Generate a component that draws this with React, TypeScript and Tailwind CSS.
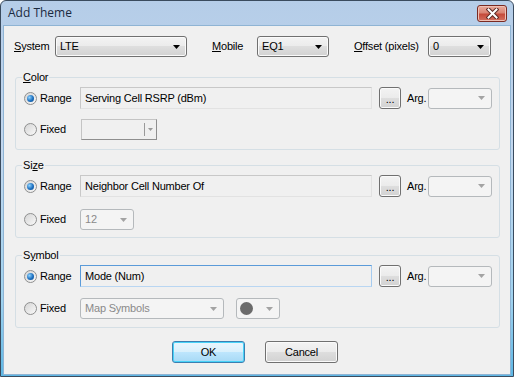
import React from 'react';

const FONT = "font-['Liberation_Sans',Arial,sans-serif] text-[11px] tracking-[-0.2px] text-black";

// ─── small pieces ─────────────────────────────────────────────────────────────
function Arrow({ disabled }: { disabled?: boolean }) {
  return (
    <svg width="7" height="4" viewBox="0 0 7 4" className="shrink-0">
      <path d="M0 0h7L3.5 4z" fill={disabled ? '#a3a3a3' : '#000'} />
    </svg>
  );
}

function Combo({ text, width, disabled, children }: { text?: string; width: string; disabled?: boolean; children?: React.ReactNode }) {
  return (
    <div
      className={`${width} h-[21px] shrink-0 rounded-[3px] border flex items-center justify-between pl-[4px] pr-[6px] ${
        disabled
          ? 'border-[#b5b9bc] bg-[#f4f4f4] text-[#8a8a8a]'
          : 'border-[#707070] bg-[linear-gradient(#f3f3f3_0%,#ebebeb_50%,#dedede_50%,#d2d2d2_100%)] shadow-[inset_0_0_0_1px_#fafafa]'
      }`}
    >
      {children ?? <span className="leading-none">{text}</span>}
      <Arrow disabled={disabled} />
    </div>
  );
}

function Radio({ checked }: { checked?: boolean }) {
  return (
    <span className="w-[13px] h-[13px] shrink-0 rounded-full border border-[#8e8f8f] bg-[linear-gradient(135deg,#d5d5d5,#f9f9f9)] flex items-center justify-center">
      {checked && (
        <span className="w-[7px] h-[7px] rounded-full bg-[radial-gradient(circle_at_35%_35%,#8fd3ff,#1c6fbf_55%,#0d4a8c)]" />
      )}
    </span>
  );
}

function RadioLabel({ label, checked }: { label: string; checked?: boolean }) {
  return (
    <div className="w-[56px] shrink-0 flex items-center gap-[3px]">
      <Radio checked={checked} />
      <span>{label}</span>
    </div>
  );
}

function TextBox({ text, focused }: { text: string; focused?: boolean }) {
  return (
    <div
      className={`w-[292px] h-[22px] shrink-0 border flex items-center px-[4px] ${
        focused
          ? 'border-[#5b9bd9] border-r-[#a6cbef] border-b-[#b9d6f2] bg-[#f0f0f0]'
          : 'border-[#c8c8c8] border-r-[#e2e2e2] border-b-[#e2e2e2] bg-[#f0f0f0]'
      }`}
    >
      {text}
    </div>
  );
}

function DotsButton() {
  return (
    <div className="ml-[7px] w-[22px] h-[22px] shrink-0 rounded-[3px] border border-[#707070] bg-[linear-gradient(#f3f3f3_0%,#ebebeb_50%,#dedede_50%,#d2d2d2_100%)] shadow-[inset_0_0_0_1px_#fafafa] flex items-end justify-center pb-[3px] leading-none">
      ...
    </div>
  );
}

function RangeRow({ text, focused }: { text: string; focused?: boolean }) {
  return (
    <div className="flex items-center mt-[3px] h-[22px]">
      <RadioLabel label="Range" checked />
      <TextBox text={text} focused={focused} />
      <DotsButton />
      <span className="ml-[6px] w-[21px] shrink-0">Arg.</span>
      <Combo width="w-[64px]" disabled />
    </div>
  );
}

function Group({ legend, children }: { legend: React.ReactNode; children: React.ReactNode }) {
  return (
    <div className="ml-[11px] w-[485px] h-[73px] rounded-[3px] border border-[#d5dfe5] pl-[8px] flex flex-col">
      <div className="-mt-[7px] h-[13px] leading-[13px] -ml-[2px] px-[1px] w-fit bg-[#f0f0f0]">{legend}</div>
      {children}
    </div>
  );
}

function Button({ label, isDefault, ml }: { label: string; isDefault?: boolean; ml: string }) {
  return (
    <div
      className={`${ml} w-[73px] h-[22px] rounded-[3px] border flex items-center justify-center ${
        isDefault
          ? 'border-[#3c7fb1] bg-[linear-gradient(#eaf6fd_0%,#d9f0fc_50%,#bee6fd_50%,#a7d9f5_100%)] shadow-[inset_0_0_0_1px_#48d3f8]'
          : 'border-[#707070] bg-[linear-gradient(#f3f3f3_0%,#ebebeb_50%,#dedede_50%,#d2d2d2_100%)] shadow-[inset_0_0_0_1px_#fafafa]'
      }`}
    >
      {label}
    </div>
  );
}

function CloseButton() {
  return (
    <div className="w-[30px] h-[17px] rounded-[3px] border border-[#7a2a22] bg-[linear-gradient(#e9a99b_0%,#d98474_45%,#c54a3a_55%,#d3705f_100%)] shadow-[inset_0_0_0_1px_#eec0b5] flex items-center justify-center">
      <svg width="13" height="11" viewBox="0 0 13 11">
        <path d="M2.5 1.5L10.5 9.5M10.5 1.5L2.5 9.5" stroke="#5a2a25" strokeWidth="4" strokeLinecap="square" />
        <path d="M2.5 1.5L10.5 9.5M10.5 1.5L2.5 9.5" stroke="#fff" strokeWidth="2" strokeLinecap="square" />
      </svg>
    </div>
  );
}

// ─── dialog ───────────────────────────────────────────────────────────────────
export default function App() {
  return (
    <div className={`w-[514px] h-[377px] ${FONT}`}>
      <div className="w-full h-full flex flex-col rounded-t-[6px] border border-[#3a4b5e] bg-[linear-gradient(#b5cde8_0%,#c2d7ee_40%,#9fd2ef_80%,#5db7e5_100%)]">
        {/* Title bar */}
        <div className="h-[24px] shrink-0 flex items-center pl-[7px] pr-[6px] justify-between">
          <span className="font-['Open_Sans',sans-serif] text-[12px] tracking-normal text-[#1a2a40] leading-none">Add Theme</span>
          <CloseButton />
        </div>

        {/* Client area */}
        <div className="flex-1 mx-[2px] mb-[1px] border border-[#8fb4d4] bg-[#f0f0f0] flex flex-col">
          {/* Top selectors */}
          <div className="flex items-center mt-[10px] pl-[10px] h-[21px]">
            <span className="w-[41px] shrink-0"><u>S</u>ystem</span>
            <Combo width="w-[132px]" text="LTE" />
            <span className="ml-[25px] w-[45px] shrink-0"><u>M</u>obile</span>
            <Combo width="w-[72px]" text="EQ1" />
            <span className="ml-[25px] w-[74px] shrink-0"><u>O</u>ffset (pixels)</span>
            <Combo width="w-[63px]" text="0" />
          </div>

          {/* Color */}
          <div className="mt-[20px]">
            <Group legend={<><u>C</u>olor</>}>
              <RangeRow text="Serving Cell RSRP (dBm)" />
              <div className="flex items-center mt-[10px] h-[21px]">
                <RadioLabel label="Fixed" />
                <div className="ml-[1px] w-[76px] h-[21px] border border-[#c4c4c4] border-b-[#8e8e8e] border-r-[#8e8e8e] bg-[#f0f0f0] flex items-center justify-end pr-[3px]">
                  <span className="w-px h-[13px] bg-[#9a9a9a] mr-[3px]" />
                  <svg width="5" height="3" viewBox="0 0 5 3"><path d="M0 0h5L2.5 3z" fill="#9a9a9a" /></svg>
                </div>
              </div>
            </Group>
          </div>

          {/* Size */}
          <div className="mt-[15px]">
            <Group legend={<>Si<u>z</u>e</>}>
              <RangeRow text="Neighbor Cell Number Of" />
              <div className="flex items-center mt-[12px] h-[21px]">
                <RadioLabel label="Fixed" />
                <Combo width="w-[54px]" text="12" disabled />
              </div>
            </Group>
          </div>

          {/* Symbol */}
          <div className="mt-[17px]">
            <Group legend={<>S<u>y</u>mbol</>}>
              <RangeRow text="Mode (Num)" focused />
              <div className="flex items-center mt-[11px] h-[21px]">
                <RadioLabel label="Fixed" />
                <Combo width="w-[144px]" text="Map Symbols" disabled />
                <div className="ml-[12px]">
                  <Combo width="w-[44px]" disabled>
                    <span className="w-[13px] h-[13px] rounded-full bg-[#6b6b6b] -ml-[1px]" />
                  </Combo>
                </div>
              </div>
            </Group>
          </div>

          {/* Buttons */}
          <div className="flex mt-[13px]">
            <Button label="OK" isDefault ml="ml-[168px]" />
            <Button label="Cancel" ml="ml-[20px]" />
          </div>
        </div>
      </div>
    </div>
  );
}
